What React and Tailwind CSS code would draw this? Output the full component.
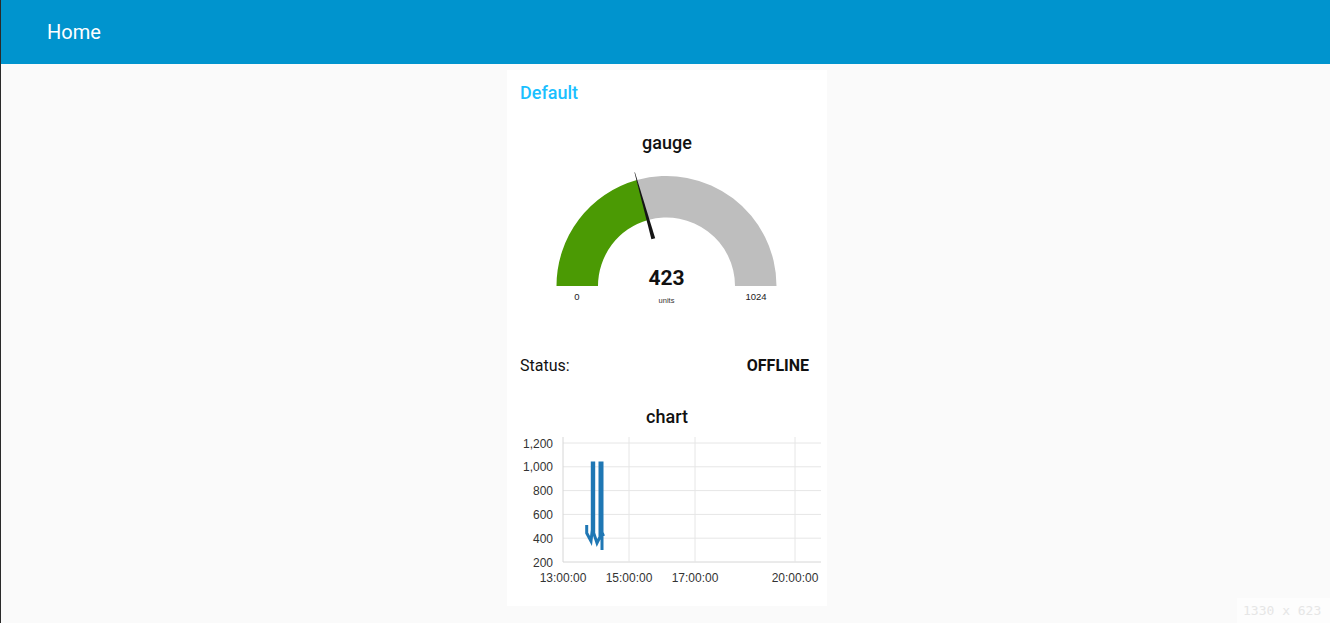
import React from "react";

const pts = [
  [586.7, 525], [586.7, 533], [591, 541], [592.3, 530], [592.3, 463], [593.7, 463],
  [593.7, 533], [597, 543], [600, 537], [600, 463], [602, 463], [602, 550], [602, 535], [604.3, 534],
].map(([x, y]) => `${(x - 507).toFixed(1)},${y - 428}`).join(" ");

function Gauge() {
  return (
    <svg width="320" height="200" viewBox="0 0 320 200" className="block">
      <g transform="translate(0,1)">
        <path d="M49.5,131 A110,110 0 0 1 129.84,25.07 L141.03,65.03 A68.5,68.5 0 0 0 91,131 Z" fill="#4b9a04" />
        <path d="M129.84,25.07 A110,110 0 0 1 269.5,131 L228,131 A68.5,68.5 0 0 0 141.03,65.03 Z" fill="#bebebe" />
        <polygon points="127.9,17.3 127.5,17.5 144.4,84.3 148.2,83.3" fill="#151515" />
        <text x="159.5" y="130" textAnchor="middle" fontSize="21" fontWeight="700" fill="#111" fontFamily="Roboto, Arial, sans-serif">423</text>
        <text x="159.5" y="148" textAnchor="middle" fontSize="7.5" fill="#333" fontFamily="Arial, 'Liberation Sans', sans-serif">units</text>
        <text x="70" y="145" textAnchor="middle" fontSize="9.5" fill="#222" fontFamily="Arial, 'Liberation Sans', sans-serif">0</text>
        <text x="249" y="145" textAnchor="middle" fontSize="9.5" fill="#222" fontFamily="Arial, 'Liberation Sans', sans-serif">1024</text>
      </g>
    </svg>
  );
}

function Chart() {
  const ys = [
    [15, "1,200"], [38.8, "1,000"], [62.6, "800"], [86.4, "600"], [110.2, "400"], [134, "200"],
  ];
  const xs = [[56, "13:00:00"], [122, "15:00:00"], [188, "17:00:00"], [288, "20:00:00"]];
  const font = "'Liberation Sans', Arial, sans-serif";
  return (
    <svg width="320" height="168" viewBox="0 0 320 168" className="block">
      {ys.map(([y, l]) => (
        <g key={l}>
          <line x1="56" x2="314" y1={y} y2={y} stroke={l === "200" ? "#d6d6d6" : "#e6e6e6"} strokeWidth="1" />
          <text x="46" y={y + 4.5} textAnchor="end" fontSize="12" fill="#333" fontFamily={font}>{l}</text>
        </g>
      ))}
      {xs.map(([x, l]) => (
        <g key={l}>
          <line x1={x} x2={x} y1="9" y2="134" stroke={x === 56 ? "#d6d6d6" : "#e6e6e6"} strokeWidth="1" />
          <text x={x} y="154" textAnchor="middle" fontSize="12" fill="#333" fontFamily={font}>{l}</text>
        </g>
      ))}
      <polyline points={pts} fill="none" stroke="#1f77b4" strokeWidth="3" strokeLinejoin="miter" />
    </svg>
  );
}

export default function App() {
  return (
    <div className="relative w-[1330px] h-[623px] overflow-hidden bg-[#fafafa] border-l border-[#2a2a2a] font-['Roboto',sans-serif]">
      <div className="h-[64px] bg-[#0094ce] flex items-center pl-[46px] text-white text-[20px]">Home</div>
      <div className="flex justify-center pl-[3px]">
        <div className="mt-[6px] w-[320px] bg-white flex flex-col pb-[10px]">
          <div className="h-[44px] flex items-center px-[13px] text-[18px] font-medium text-[#1bbfff]">Default</div>
          <div className="mt-[16px] h-[24px] flex items-center justify-center text-[18px] font-medium text-[#111]">gauge</div>
          <Gauge />
          <div className="h-[24px] flex items-center justify-between pl-[13px] pr-[18px] text-[16px] text-[#111]">
            <span>Status:</span>
            <span className="font-bold">OFFLINE</span>
          </div>
          <div className="mt-[26px] h-[24px] flex items-center justify-center text-[18px] font-medium text-[#111]">chart</div>
          <Chart />
        </div>
      </div>
      <div className="absolute right-0 bottom-0 w-[93px] h-[25px] bg-[#fdfdfd] flex items-center pl-[6px] text-[13px] text-[#e6e6e6] font-['DejaVu_Sans_Mono',monospace]">1330 x 623</div>
    </div>
  );
}
